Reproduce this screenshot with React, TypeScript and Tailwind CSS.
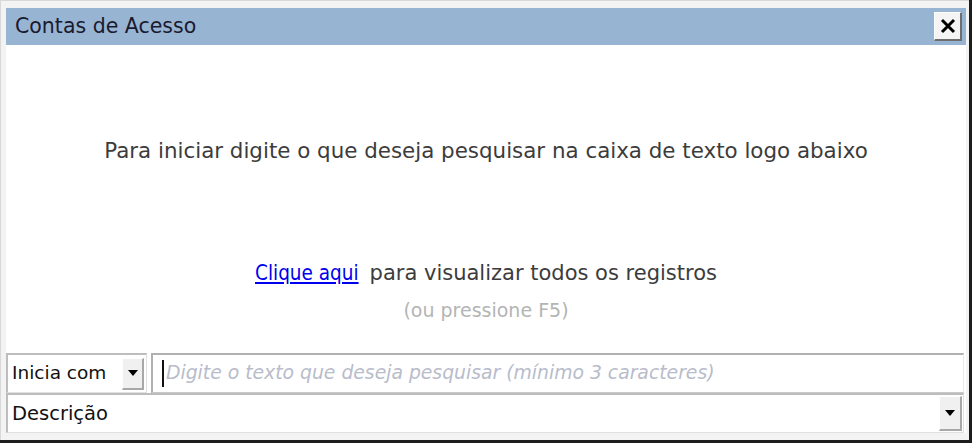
import React from "react";

const font = { fontFamily: '"DejaVu Sans", Tahoma, Verdana, sans-serif' };
const condensed = { fontFamily: '"DejaVu Sans Condensed", "DejaVu Sans", Tahoma, sans-serif' };

export default function App() {
  return (
    <div className="w-[974px] h-[444px] bg-white" style={font}>
      <div className="w-[972px] h-[443px] border-r-[3px] border-b-[3px] border-[#1c1c1c] bg-[#f3f3f3] flex flex-col">
        <div className="flex-1 flex flex-col border-t border-l border-[#d8d8d8] pl-[5px] pt-[7px] pr-[3px] pb-[7px]">
          {/* title bar */}
          <div className="h-[37px] bg-[#98b4d3] flex items-center justify-between pl-[9px] pr-[4px]">
            <span className="text-[20.5px] text-[#1a1a2e] leading-none">Contas de Acesso</span>
            <div className="w-[28px] h-[29px] bg-[#f4f4f4] border-t border-l border-white border-r-2 border-b-2 border-r-[#6e6e6e] border-b-[#6e6e6e] flex items-center justify-center">
              <svg width="16" height="16" viewBox="0 0 16 16">
                <path d="M2 2 L14 14 M14 2 L2 14" stroke="#000" strokeWidth="3" />
              </svg>
            </div>
          </div>
          {/* content */}
          <div className="flex-1 bg-white flex flex-col items-center">
            <div className="mt-[95px] text-[21.4px] text-[#3c3c3c] leading-none whitespace-nowrap">
              Para iniciar digite o que deseja pesquisar na caixa de texto logo abaixo
            </div>
            <div className="mt-[102px] leading-none whitespace-nowrap flex items-baseline">
              <span className="text-[20.5px] text-[#0000ee] underline" style={condensed}>Clique aqui</span>
              <span className="ml-[11px] text-[21px] text-[#3c3c3c]">para visualizar todos os registros</span>
            </div>
            <div className="mt-[17px] text-[19px] text-[#b4b4b4] leading-none">(ou pressione F5)</div>
          </div>
          {/* controls */}
          <div className="bg-white pt-[2px] flex flex-col">
            <div className="flex h-[40px]">
              <div className="w-[141px] h-[40px] border-t-2 border-l-2 border-[#bdbdbd] border-r border-b border-r-[#e0e0e0] border-b-[#e0e0e0] flex items-center pl-[4px] pr-[2px]">
                <span className="flex-1 text-[18.5px] text-[#111] leading-none whitespace-nowrap">Inicia com</span>
                <div className="w-[22px] h-[32px] bg-[#f0f0f0] border-r-2 border-b-2 border-[#a8a8a8] border-t border-l border-t-white border-l-white flex items-center justify-center">
                  <svg width="10" height="6" viewBox="0 0 10 6"><path d="M0 0 H10 L5 6 Z" fill="#000" /></svg>
                </div>
              </div>
              <div className="ml-[4px] flex-1 h-[40px] border-t-2 border-l-2 border-[#b0b0b0] border-r border-b border-r-[#e8e8e8] border-b-[#c8c8c8] flex items-center pl-[9px] mr-[2px]">
                <div className="w-[2px] h-[27px] bg-[#111]" />
                <span className="ml-[2px] text-[18.8px] italic text-[#b8bccb] leading-none whitespace-nowrap">
                  Digite o texto que deseja pesquisar (mínimo 3 caracteres)
                </span>
              </div>
            </div>
            <div className="flex h-[40px] border-t-2 border-l-2 border-[#bdbdbd] border-r border-b border-r-[#e0e0e0] border-b-[#e0e0e0] items-center pl-[4px] pr-[1px] mr-[2px]">
              <span className="flex-1 text-[19.5px] text-[#111] leading-none">Descrição</span>
              <div className="w-[23px] h-[35px] bg-[#f0f0f0] border-r-2 border-b-2 border-[#a8a8a8] border-t border-l border-t-white border-l-white flex items-center justify-center">
                <svg width="10" height="6" viewBox="0 0 10 6"><path d="M0 0 H10 L5 6 Z" fill="#000" /></svg>
              </div>
            </div>
          </div>
        </div>
      </div>
    </div>
  );
}
